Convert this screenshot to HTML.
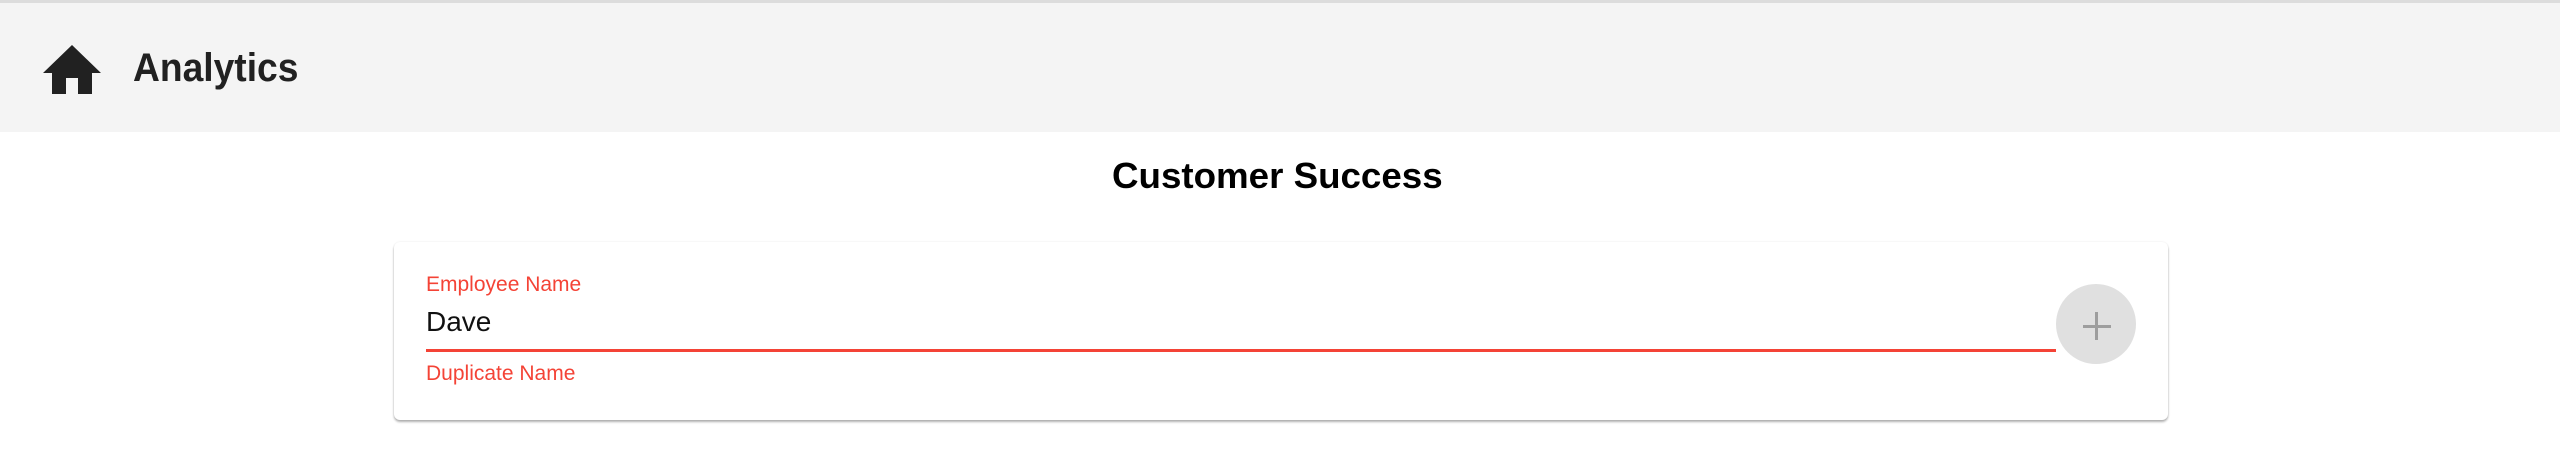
<!DOCTYPE html>
<html><head><style>
*{margin:0;padding:0;box-sizing:border-box}
body{width:2560px;height:454px;background:#fff;font-family:"Liberation Sans",sans-serif;position:relative;overflow:hidden}
.top{position:absolute;left:0;top:0;width:2560px;height:3px;background:#dcdcdc}
.hdr{position:absolute;left:0;top:3px;width:2560px;height:129px;background:#f4f4f4}
.t{position:absolute;white-space:nowrap;transform-origin:0 0}
.card{position:absolute;left:394px;top:242px;width:1774px;height:178px;background:#fff;border-radius:6px;box-shadow:0 2px 2px rgba(0,0,0,.3),0 0 2px rgba(0,0,0,.08)}
.red{color:#f44336}
</style></head><body>
<div class="top"></div>
<div class="hdr"></div>
<svg style="position:absolute;left:43px;top:45px" width="58" height="49" viewBox="0 0 58 49"><path d="M29 0 L58 28 L49 28 L49 49 L35 49 L35 33 L23 33 L23 49 L9 49 L9 28 L0 28 Z" fill="#212121"/></svg>
<div class="t" style="left:133px;top:46px;font-size:40px;font-weight:bold;color:#212121;transform:scaleX(0.93)">Analytics</div>
<div class="t" style="left:1112px;top:155px;font-size:36px;font-weight:bold;color:#000;transform:scaleX(1.02)">Customer Success</div>
<div class="card"></div>
<div class="t red" style="left:426px;top:273px;font-size:21px">Employee Name</div>
<div class="t" style="left:426px;top:306px;font-size:28px;color:#111">Dave</div>
<div style="position:absolute;left:426px;top:349px;width:1630px;height:3px;background:#f44336"></div>
<div class="t red" style="left:426px;top:362px;font-size:21px">Duplicate Name</div>
<div style="position:absolute;left:2056px;top:284px;width:80px;height:80px;border-radius:50%;background:#e0e0e0"></div>
<div style="position:absolute;left:2083px;top:325px;width:28px;height:3px;background:#9e9e9e"></div>
<div style="position:absolute;left:2095px;top:312px;width:3px;height:28px;background:#9e9e9e"></div>
</body></html>
